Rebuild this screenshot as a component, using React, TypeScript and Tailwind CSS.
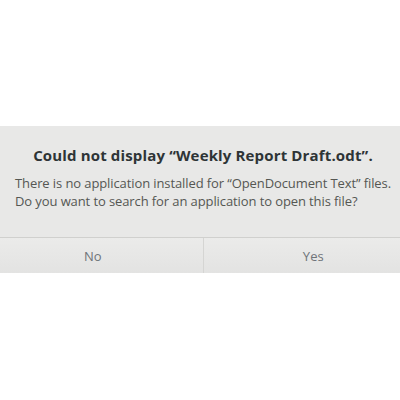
export default function App() {
  return (
    <div className="w-[400px] h-[400px] bg-white flex flex-col overflow-hidden font-['Open_Sans',sans-serif]">
      <div className="h-[126px] shrink-0" />
      {/* dialog is a bit wider than the viewport and shifted left */}
      <div className="w-[440px] ml-[-17px] shrink-0 bg-[#e8e8e7] flex flex-col">
        <div className="flex flex-col items-center pt-[18px] pb-[27px]">
          <h1 className="text-[15px] font-bold text-[#2e3436] leading-[22px] tracking-[0.15px]">
            Could not display “Weekly Report Draft.odt”.
          </h1>
          <p className="mt-[8px] text-[13px] text-[#555753] leading-[18px] text-left tracking-[-0.1px]">
            There is no application installed for “OpenDocument Text” files.
            <br />
            Do you want to search for an application to open this file?
          </p>
        </div>
        <div className="flex border-t border-[#d0d0ce] h-[36px]">
          <button className="flex-1 pt-[3px] bg-gradient-to-b from-[#ebebea] to-[#e3e3e2] text-[13px] text-[#6f7479] border-r border-[#d5d5d3]">
            No
          </button>
          <button className="flex-1 pt-[3px] bg-gradient-to-b from-[#ebebea] to-[#e3e3e2] text-[13px] text-[#6f7479]">
            Yes
          </button>
        </div>
      </div>
    </div>
  )
}
